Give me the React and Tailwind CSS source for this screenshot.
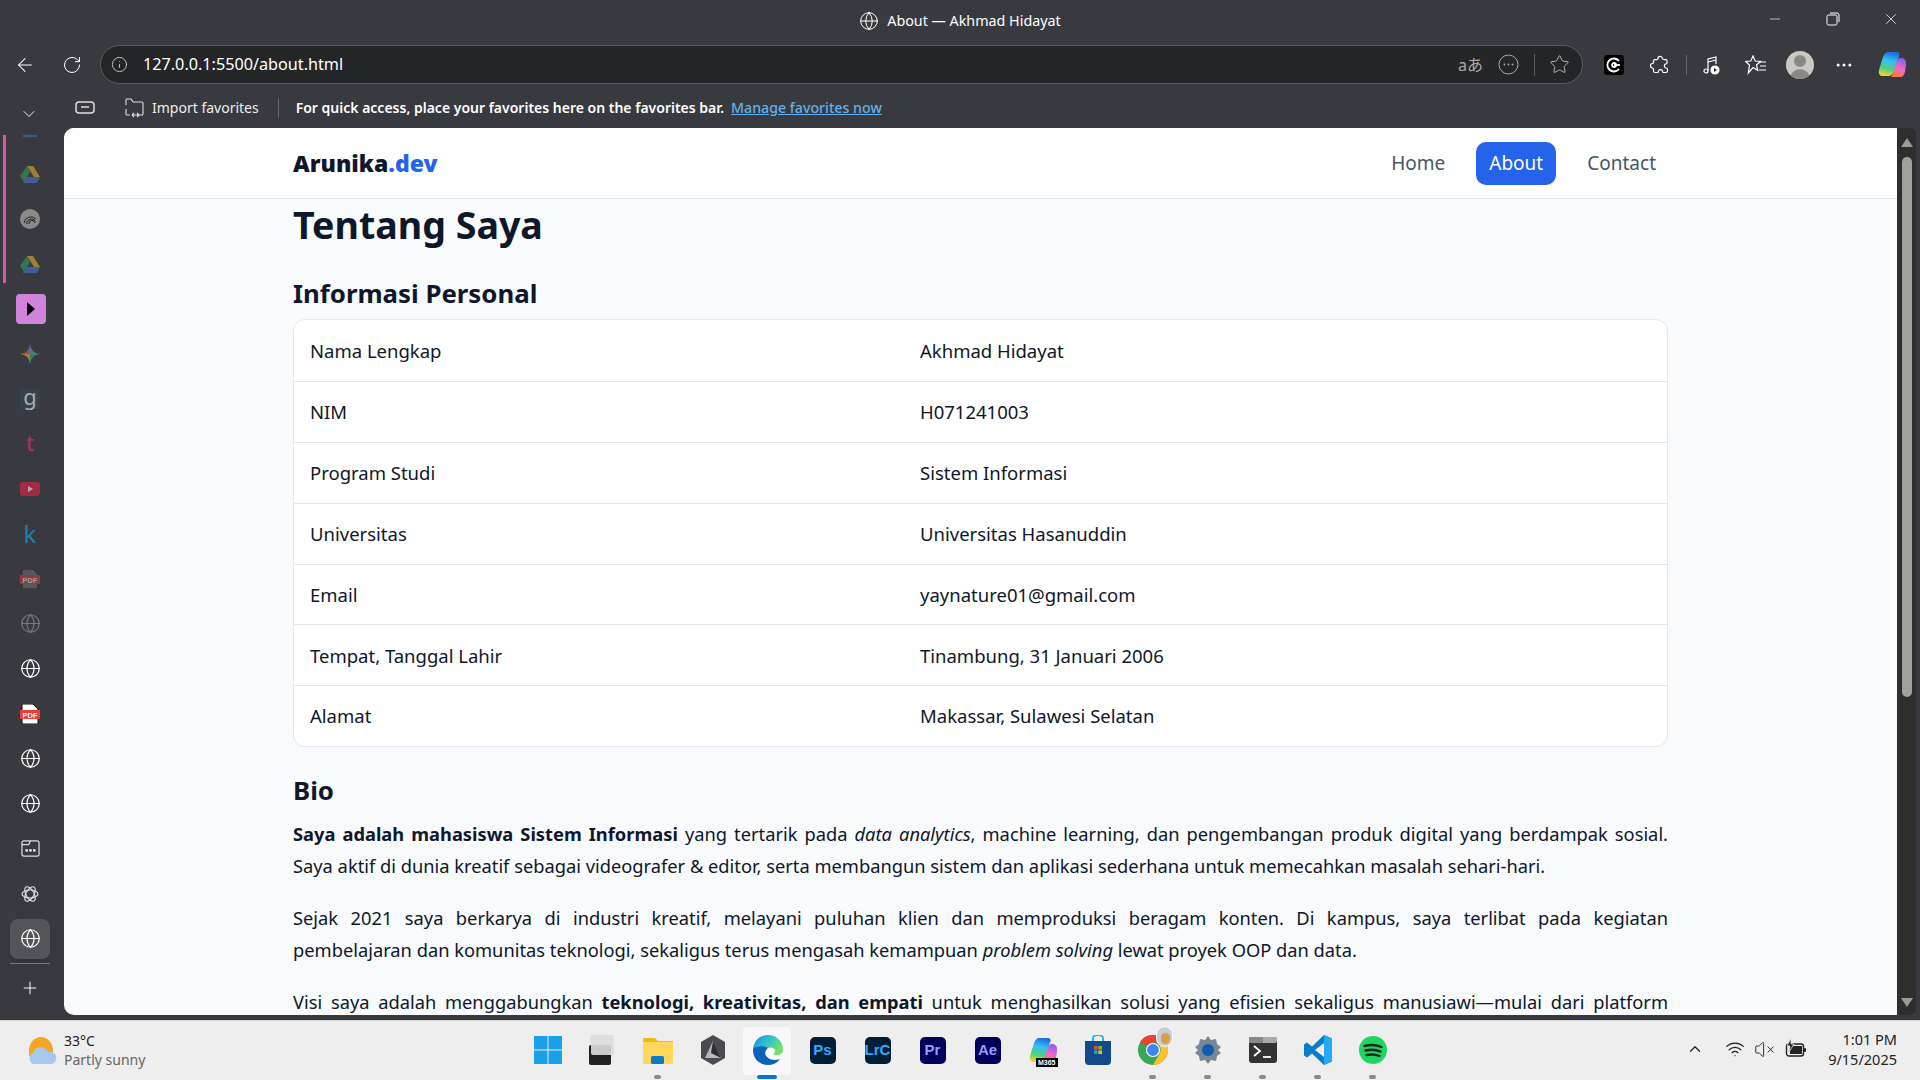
import React from 'react';
import { ArrowLeft, RotateCw, Info, Globe, Ellipsis, Star, Plus, ChevronDown, ChevronUp, Minus, X, Wifi, VolumeX } from 'lucide-react';

const font = { fontFamily: '"Noto Sans", sans-serif' };

function Drive({ dim }) {
  return (
    <svg width="20" height="18" viewBox="0 0 20 18" className={dim ? 'opacity-60' : ''}>
      <path d="M7 1h6l7 11h-6z" fill="#e0b030" />
      <path d="M7 1l3 6-6 10-4-6z" fill="#2f9e55" />
      <path d="M6 12h14l-3 6H3z" fill="#4a78c8" />
    </svg>
  );
}

function Pdf({ dim }) {
  return (
    <svg width="20" height="20" viewBox="0 0 20 20" className={dim ? 'opacity-50' : ''}>
      <path d="M2 0h11l5 5v15H2z" fill={dim ? '#777' : '#fff'} stroke="#111" strokeWidth="1" />
      <rect x="0" y="6" width="20" height="9" fill="#ee3a3a" />
      <text x="10" y="13.5" textAnchor="middle" fontSize="7.5" fontWeight="700" fill="#fff" fontFamily="Liberation Sans">PDF</text>
    </svg>
  );
}

function SideRow({ children, active }) {
  return (
    <div className="h-[45px] flex items-center justify-center shrink-0 pr-[4px]">
      {active ? (
        <div className="w-10 h-10 rounded-lg bg-[#54555a] shadow-md flex items-center justify-center">{children}</div>
      ) : children}
    </div>
  );
}

function Sidebar() {
  const g = <Globe size={21} strokeWidth={1.4} className="text-white" />;
  return (
    <aside className="w-16 shrink-0 flex flex-col relative overflow-hidden">
      <div className="absolute left-[3px] top-[7px] w-[3px] h-[148px] bg-[#d65aa8]" />
      <div className="absolute left-[23px] top-[7px] w-[14px] h-[2px] bg-[#3a5a9a]" />
      <div className="h-[23px] shrink-0" />
      <SideRow><Drive dim /></SideRow>
      <SideRow>
        <div className="w-5 h-5 rounded-full bg-[#8a8a8a] flex items-center justify-center">
          <svg width="14" height="12" viewBox="0 0 14 12" fill="none" stroke="#222" strokeWidth="1"><path d="M1 10a7 7 0 0 1 12-4M3.500 11a5 5 0 0 1 9-3M6 11a3 3 0 0 1 6-1" /></svg>
        </div>
      </SideRow>
      <SideRow><Drive dim /></SideRow>
      <SideRow>
        <div className="w-[30px] h-[30px] rounded-[4px] bg-[#d183dc] flex items-center justify-center ml-[2px]">
          <svg width="10" height="14" viewBox="0 0 10 14"><path d="M1 0l8 7-8 7z" fill="#000" /></svg>
        </div>
      </SideRow>
      <SideRow>
        <svg width="20" height="20" viewBox="0 0 20 20" className="opacity-70">
          <path d="M10 0q1 9 10 10h-10z" fill="#5a8fd0" /><path d="M10 0q-1 9-10 10h10z" fill="#c95a50" />
          <path d="M10 20q1-9 10-10h-10z" fill="#3f9e60" /><path d="M10 20q-1-9-10-10h10z" fill="#c89a3a" />
        </svg>
      </SideRow>
      <SideRow>
        <div className="w-5 h-5 bg-[#3a4048] flex items-center justify-center">
          <span className="text-[#a3acb0] text-[22px] font-normal leading-none -mt-[5px]" style={font}>g</span>
        </div>
      </SideRow>
      <SideRow><span className="text-[#a8325c] text-[21px] font-medium leading-none" style={font}>t</span></SideRow>
      <SideRow>
        <div className="w-5 h-[14px] rounded-[3px] bg-[#a52a45] flex items-center justify-center">
          <svg width="5" height="6" viewBox="0 0 5 6"><path d="M0 0l5 3-5 3z" fill="#aaa" /></svg>
        </div>
      </SideRow>
      <SideRow><span className="text-[#1f7ea8] text-[24px] font-normal leading-none" style={font}>k</span></SideRow>
      <SideRow><Pdf dim /></SideRow>
      <SideRow><Globe size={21} strokeWidth={1.4} className="text-[#77787c]" /></SideRow>
      <SideRow>{g}</SideRow>
      <SideRow><Pdf /></SideRow>
      <SideRow>{g}</SideRow>
      <SideRow>{g}</SideRow>
      <SideRow>
        <svg width="19" height="19" viewBox="0 0 20 20" fill="none" stroke="#ddd" strokeWidth="1.3">
          <path d="M3 2h14a2 2 0 0 1 2 2v12a2 2 0 0 1-2 2H3a2 2 0 0 1-2-2V4a2 2 0 0 1 2-2z" />
          <path d="M1 6h7l2-4" />
          <circle cx="6" cy="12" r=".9" fill="#ddd" /><circle cx="10" cy="12" r=".9" fill="#ddd" /><circle cx="14" cy="12" r=".9" fill="#ddd" />
        </svg>
      </SideRow>
      <SideRow>
        <svg width="18" height="18" viewBox="0 0 18 18" fill="none" stroke="#ddd" strokeWidth="1.2">
          <ellipse cx="9" cy="9" rx="8" ry="4" /><ellipse cx="9" cy="9" rx="8" ry="4" transform="rotate(60 9 9)" /><ellipse cx="9" cy="9" rx="8" ry="4" transform="rotate(120 9 9)" />
        </svg>
      </SideRow>
      <SideRow active>{g}</SideRow>
      <div className="h-[1px] bg-[#77787c] ml-[10px] mr-[14px] mt-[2px] shrink-0" />
      <div className="h-[48px] flex items-center justify-center shrink-0 pr-[4px]"><Plus size={20} strokeWidth={1.2} className="text-white" /></div>
    </aside>
  );
}

function TitleBar() {
  return (
    <div className="h-[42px] shrink-0 flex items-center relative">
      <div className="flex-1 flex items-center justify-center gap-[8px] text-white text-[14.3px] pb-[1px]" style={font}>
        <Globe size={20} strokeWidth={1.2} />
        <span>About — Akhmad Hidayat</span>
      </div>
      <div className="absolute right-0 top-0 h-[38px] flex items-center text-white">
        <div className="w-[58px] flex justify-center"><Minus size={16} strokeWidth={1} /></div>
        <div className="w-[58px] flex justify-center">
          <svg width="14" height="14" viewBox="0 0 14 14" fill="none" stroke="#fff" strokeWidth="1"><rect x="1" y="3" width="10" height="10" rx="1.5" /><path d="M4 1h7a2 2 0 0 1 2 2v7" /></svg>
        </div>
        <div className="w-[58px] flex justify-center"><X size={18} strokeWidth={1} /></div>
      </div>
    </div>
  );
}

function Copilot({ id = 'cp' }) {
  return (
    <svg width="28" height="27" viewBox="0 0 28 27">
      <defs>
        <linearGradient id={id + 'a'} x1="0.5" y1="0" x2="0.3" y2="1"><stop offset="0" stopColor="#1b6fe0" /><stop offset=".35" stopColor="#35c1f1" /><stop offset=".7" stopColor="#52d17c" /><stop offset="1" stopColor="#ffd02e" /></linearGradient>
        <linearGradient id={id + 'b'} x1="0.7" y1="0" x2="0.4" y2="1"><stop offset="0" stopColor="#8a5cf0" /><stop offset=".55" stopColor="#f06bc5" /><stop offset="1" stopColor="#ff7a3c" /></linearGradient>
      </defs>
      <path d="M10 1h9c2 0 3 1 2.500 3L16 20c-1 3-3 5-6 5H5c-3 0-5-2-4-6L5 6c1-3 3-5 5-5z" fill={`url(#${id}a)`} />
      <path d="M13 26h9c3 0 4-2 5-5l1-7c.5-4-1-7-5-7-2 0-3 1-4 3l-4 11c-.5 2-1 4-2 5z" fill={`url(#${id}b)`} />
    </svg>
  );
}

function ToolBar() {
  return (
    <div className="h-[45px] shrink-0 flex items-center text-white">
      <div className="w-[50px] flex justify-center"><ArrowLeft size={22} strokeWidth={1.1} /></div>
      <div className="w-[50px] flex justify-center -ml-[3px] mr-[3px]"><RotateCw size={20} strokeWidth={1.2} /></div>
      <div className="w-[1483px] h-[39px] rounded-full bg-[#242527] border border-[#5b5c60] flex items-center pl-[10px] pr-[10px]">
        <Info size={17} strokeWidth={1.2} className="text-[#d8d8d8]" />
        <span className="ml-[15px] text-[16.2px] text-white" style={font}>127.0.0.1:5500/about.html</span>
        <div className="flex-1" />
        <span className="text-[#aaa] text-[16px] mr-[15px]" style={{ fontFamily: '"Noto Sans","Noto Sans CJK JP",sans-serif' }}>aあ</span>
        <svg width="21" height="21" viewBox="0 0 21 21" fill="none" stroke="#aaa" strokeWidth="1" className="mr-[15px]">
          <circle cx="10.5" cy="10.500" r="9.500" />
          <circle cx="6.500" cy="10.500" r=".9" fill="#aaa" stroke="none" /><circle cx="10.500" cy="10.500" r=".9" fill="#aaa" stroke="none" /><circle cx="14.500" cy="10.500" r=".9" fill="#aaa" stroke="none" />
        </svg>
        <div className="w-px h-[22px] bg-[#5b5c60] mr-[14px]" />
        <Star size={21} strokeWidth={1.1} className="text-[#bbb] mr-[2px]" />
      </div>
      <div className="ml-[21px] w-5 h-5 rounded-[3px] bg-black flex items-center justify-center">
        <svg width="16" height="16" viewBox="0 0 16 16" fill="none" stroke="#fff" strokeWidth="1.8"><path d="M13 4a6.500 6.500 0 1 0 0 8" /><circle cx="8" cy="8" r="2" /><path d="M8 8h6" /></svg>
      </div>
      <svg width="20" height="20" viewBox="0 0 20 20" fill="none" stroke="#fff" strokeWidth="1.2" strokeLinejoin="round" className="ml-[26px]">
        <path d="M8 3.500C8 1 12 .5 12.500 3.500c.1 1 1 1.200 2 1.200h1.500a1 1 0 0 1 1 1v2.300c0 .8-1 1-1.500 1C14 9 14 13 16 13c.5 0 1.500.2 1.500 1v2a1.500 1.500 0 0 1-1.500 1.500h-2.500c-.8 0-1-.8-1-1.300 0-2.200-4-2.200-4 0 0 .6-.3 1.300-1 1.300H5c-1 0-1.500-.7-1.500-1.500v-2c0-.8-.6-1-1.200-1-2.500-.5-2.500-4 0-4.500.6 0 1.200-.3 1.200-1V6c0-.8.600-1.300 1.500-1.300h1.500c1 0 1.500-.4 1.500-1.200z" />
      </svg>
      <div className="w-px h-5 bg-[#66676b] ml-[16px]" />
      <svg width="18" height="20" viewBox="0 0 18 20" fill="none" stroke="#fff" strokeWidth="1.2" className="ml-[16px]">
        <circle cx="3" cy="16" r="2" /><path d="M5 16V4l8-2v7" /><path d="M5 7l8-2" /><circle cx="12" cy="15" r="4" fill="#fff" /><path d="M11 13l3 2-3 2z" fill="#222" stroke="none" />
      </svg>
      <svg width="22" height="20" viewBox="0 0 22 20" fill="none" stroke="#fff" strokeWidth="1.2" className="ml-[24px]">
        <path d="M8 1l2.200 5 5.300.5-4 3.500 1.200 5.300L8 12.600 3.300 18 4.500 10 .5 6.500 5.800 6z" /><path d="M15 7h6M15 11h6M14 15h7" />
      </svg>
      <div className="ml-[19px] w-7 h-7 rounded-full bg-[#c9c8c3] relative overflow-hidden">
        <div className="absolute left-[8px] top-[4px] w-3 h-3 rounded-full bg-[#8a8985]" />
        <div className="absolute left-[4px] top-[18px] w-5 h-5 rounded-full bg-[#8a8985]" />
      </div>
      <Ellipsis size={20} strokeWidth={1.6} className="ml-[20px]" />
      <div className="ml-[24px]"><Copilot /></div>
    </div>
  );
}

function FavBar() {
  return (
    <div className="h-[41px] shrink-0 flex items-center text-white text-[14px]" style={font}>
      <div className="w-[57px] flex justify-center mt-[12px]"><ChevronDown size={20} strokeWidth={1.1} /></div>
      <svg width="20" height="14" viewBox="0 0 20 14" fill="none" stroke="#ddd" strokeWidth="1.5" className="ml-[18px]"><rect x="1" y="1" width="18" height="11" rx="3" /><path d="M6 6h8" /></svg>
      <svg width="22" height="22" viewBox="0 0 22 22" fill="none" stroke="#ddd" strokeWidth="1.1" className="ml-[28px]">
        <path d="M3 8V3a1 1 0 0 1 1-1h4l2 3h9a1 1 0 0 1 1 1v11a1 1 0 0 1-1 1h-3M3 12v5a1 1 0 0 0 1 1h3M9 18h7M9 18l2-2M9 18l2 2M16 18l-2-2M16 18l-2 2" />
      </svg>
      <span className="ml-[7px] text-[#eee]">Import favorites</span>
      <div className="w-px h-5 bg-[#66676b] ml-[19px]" />
      <span className="ml-[17px] font-semibold">For quick access, place your favorites here on the favorites bar.</span>
      <span className="ml-[7px] underline text-[#62b0ee] font-medium text-[14.2px]">Manage favorites now</span>
    </div>
  );
}

const rows = [
  ['Nama Lengkap', 'Akhmad Hidayat'],
  ['NIM', 'H071241003'],
  ['Program Studi', 'Sistem Informasi'],
  ['Universitas', 'Universitas Hasanuddin'],
  ['Email', 'yaynature01@gmail.com'],
  ['Tempat, Tanggal Lahir', 'Tinambung, 31 Januari 2006'],
  ['Alamat', 'Makassar, Sulawesi Selatan'],
];

function Page() {
  return (
    <div className="flex-1 min-w-0 h-full bg-[#f8fafc] rounded-tl-[10px] rounded-bl-[10px] overflow-hidden text-[#0f172a]" style={font}>
      <header className="h-[71px] bg-white border-b border-[#e2e8f0] flex items-center px-[229px]">
        <div className="text-[23px] font-black pt-[1px]">Arunika<span className="text-[#2563eb]">.dev</span></div>
        <div className="flex-1" />
        <nav className="flex items-center gap-[19px] text-[19px] text-[#475569]">
          <span className="px-[12px]">Home</span>
          <span className="h-[43px] w-[80px] flex items-center justify-center rounded-[10px] bg-[#2563eb] text-white">About</span>
          <span className="px-[12px]">Contact</span>
        </nav>
      </header>
      <main className="px-[229px]">
        <h1 className="text-[37.6px] font-bold leading-[54px] -mt-[1px]">Tentang Saya</h1>
        <h2 className="text-[25.8px] font-bold leading-[38px] mt-[22px] mb-[7px]">Informasi Personal</h2>
        <div className="rounded-[12px] border border-[#e2e8f0] bg-white">
          {rows.map(([a, b], i) => (
            <div key={a} className={`h-[60.9px] flex items-center text-[18.5px] ${i ? 'border-t border-[#e2e8f0]' : ''}`}>
              <div className="w-[626px] pl-[16px] shrink-0">{a}</div>
              <div>{b}</div>
            </div>
          ))}
        </div>
        <h2 className="text-[25.8px] font-bold leading-[38px] mt-[24px] mb-[9px]">Bio</h2>
        <p className="text-[18.3px] leading-[32px] text-justify mb-[20px]">
          <b>Saya adalah mahasiswa Sistem Informasi</b> yang tertarik pada <i>data analytics</i>, machine learning, dan pengembangan produk digital yang berdampak sosial. Saya aktif di dunia kreatif sebagai videografer &amp; editor, serta membangun sistem dan aplikasi sederhana untuk memecahkan masalah sehari-hari.
        </p>
        <p className="text-[18.3px] leading-[32px] text-justify mb-[20px]">
          <span className="block [text-align-last:justify]">Sejak 2021 saya berkarya di industri kreatif, melayani puluhan klien dan memproduksi beragam konten. Di kampus, saya terlibat pada kegiatan</span>
          pembelajaran dan komunitas teknologi, sekaligus terus mengasah kemampuan <i>problem solving</i> lewat proyek OOP dan data.
        </p>
        <p className="text-[18.3px] leading-[32px] text-justify">
          <span className="block [text-align-last:justify]">Visi saya adalah menggabungkan <b>teknologi, kreativitas, dan empati</b> untuk menghasilkan solusi yang efisien sekaligus manusiawi—mulai dari platform</span>
          digital hingga karya visual yang berdampak bagi banyak orang.
        </p>
      </main>
    </div>
  );
}

function Scrollbar() {
  return (
    <div className="w-[19px] shrink-0 h-full bg-[#2e2e2f] rounded-tr-[6px] rounded-br-[6px] flex flex-col items-center pt-[10px] pb-[8px]">
      <svg width="12" height="9" viewBox="0 0 12 9" className="shrink-0"><path d="M6 0l6 9H0z" fill="#9a9a9a" /></svg>
      <div className="w-[10px] h-[540px] rounded-full bg-[#a0a0a0] mt-[10px] shrink-0" />
      <div className="flex-1" />
      <svg width="12" height="9" viewBox="0 0 12 9" className="shrink-0"><path d="M0 0h12L6 9z" fill="#9a9a9a" /></svg>
    </div>
  );
}

function TIcon({ children, dot, active }) {
  return (
    <div className="w-[55px] h-[58px] relative flex items-center justify-center shrink-0">
      {active && <div className="absolute left-[3px] top-[6px] w-[48px] h-[48px] rounded-[4px] bg-[#f8f8f8]" />}
      <div className="relative flex items-center justify-center">{children}</div>
      {dot && <div className="absolute left-[24px] bottom-[0px] w-[7px] h-[4px] rounded-full bg-[#8a8a8a]" />}
      {active && <div className="absolute left-[17px] bottom-[0px] w-5 h-[4px] rounded-full bg-[#0a74d6]" />}
    </div>
  );
}

function Adobe({ bg, fg, t }) {
  return <div className={`w-[26px] h-[27px] rounded-[5px] flex items-center justify-center text-[15px] font-semibold ${bg} ${fg}`} style={{ fontFamily: '"Liberation Sans", sans-serif' }}>{t}</div>;
}

function Taskbar() {
  return (
    <div className="h-[60px] shrink-0 bg-[#eeeeee] border-t border-[#d8d8d8] flex items-center relative">
      <div className="absolute left-[27px] top-[10px] flex items-center gap-[7px]">
        <svg width="30" height="32" viewBox="0 0 30 32">
          <path d="M2 17a12 14 0 0 1 24 0z" fill="#f6a623" /><rect x="2" y="14" width="24" height="8" fill="#f6a623" />
          <path d="M6 30a6 6 0 0 1 0-11 8 8 0 0 1 15-1 6 6 0 0 1 4 12z" fill="#a9c8f0" />
        </svg>
        <div className="text-[14px] leading-[19px] text-[#222]" style={font}>
          <div>33°C</div>
          <div className="text-[#666]">Partly sunny</div>
        </div>
      </div>
      <div className="absolute left-[520px] top-0 flex">
        <TIcon>
          <svg width="28" height="28" viewBox="0 0 28 28"><path d="M0 0h13.500v13.500H0zM14.500 0H28v13.500H14.500zM0 14.500h13.500V28H0zM14.500 14.500H28V28H14.500z" fill="#1aa0e8" /></svg>
        </TIcon>
        <TIcon>
          <div className="w-[24px] h-[30px] relative -ml-[4px]">
            <div className="absolute left-0 bottom-0 w-[22px] h-[20px] rounded-[2px] bg-[#222]" />
            <div className="absolute right-0 top-0 w-[22px] h-[20px] rounded-[2px] bg-[#ddd] opacity-90 shadow" />
          </div>
        </TIcon>
        <TIcon dot>
          <svg width="30" height="28" viewBox="0 0 30 28"><path d="M0 2h12l3 3h15v23H0z" fill="#f2b90f" /><path d="M0 6h30v22H0z" fill="#ffd75a" /><rect x="8" y="20" width="13" height="8" rx="1.500" fill="#0f7bc8" /></svg>
        </TIcon>
        <TIcon>
          <svg width="28" height="30" viewBox="0 0 28 30"><path d="M14 0l12 7v16l-12 7-12-7V7z" fill="#4a4a50" /><path d="M14 6l8 17H6z" fill="#b8b8bc" /><path d="M14 6l-2 12 10 5z" fill="#2d2d30" /></svg>
        </TIcon>
        <TIcon active>
          <svg width="30" height="30" viewBox="0 0 30 30">
            <defs><linearGradient id="edg" x1="0" y1="0.2" x2="1" y2="0.6"><stop offset="0" stopColor="#1a8fe0" /><stop offset=".55" stopColor="#35c4c8" /><stop offset="1" stopColor="#72e06a" /></linearGradient></defs>
            <path d="M15 0C6 0 0 7 0 15h30C30 6 23 0 15 0z" fill="url(#edg)" />
            <path d="M30 15c0 3-3 5-6 5-3 0-6-1-6-3 0-2 2-3 2-3l10 1z" fill="#72e06a" />
            <path d="M0 15c0 9 7 15 15 15 5 0 9-2 12-6-5 2-10 1-13-2-3-3-2-7 1-9-4-2-8-2-11-1C2 12 0 13 0 15z" fill="#0c63b8" />
            <path d="M15 13c3-1.500 7 0 7 3 0 1.500-1 2.500-2 3-2 1-5 0-6-2-.5-1.500 0-3.500 1-4z" fill="#fff" />
          </svg>
        </TIcon>
        <TIcon><Adobe bg="bg-[#001e36]" fg="text-[#31a8ff]" t="Ps" /></TIcon>
        <TIcon><Adobe bg="bg-[#001e36]" fg="text-[#31a8ff]" t="LrC" /></TIcon>
        <TIcon><Adobe bg="bg-[#00005b]" fg="text-[#9999ff]" t="Pr" /></TIcon>
        <TIcon><Adobe bg="bg-[#00005b]" fg="text-[#9999ff]" t="Ae" /></TIcon>
        <TIcon>
          <div className="relative"><Copilot id="cm" />
            <span className="absolute -right-[1px] -bottom-[3px] bg-black text-white text-[7px] font-bold px-[2px] leading-[9px]" style={{ fontFamily: '"Liberation Sans", sans-serif' }}>M365</span>
          </div>
        </TIcon>
        <TIcon>
          <svg width="26" height="30" viewBox="0 0 26 30" fill="none"><path d="M8 6V3a5 3 0 0 1 10 0v3" stroke="#2bb4e8" strokeWidth="2" /><path d="M0 6h26v20a4 4 0 0 1-4 4H4a4 4 0 0 1-4-4z" fill="#144a8a" /><path d="M9 11h3.600v3.600H9z" fill="#f25022" /><path d="M13.400 11H17v3.600h-3.600z" fill="#7fba00" /><path d="M9 15.400h3.600V19H9z" fill="#00a4ef" /><path d="M13.400 15.400H17V19h-3.600z" fill="#ffb900" /></svg>
        </TIcon>
        <TIcon dot>
          <div className="relative">
            <svg width="30" height="30" viewBox="0 0 30 30"><circle cx="15" cy="15" r="15" fill="#3aa757" /><path d="M15 0a15 15 0 0 1 13 7.500H15a7.500 7.500 0 0 0-6.500 3.800L2 7A15 15 0 0 1 15 0z" fill="#ea4335" /><path d="M28 7.500A15 15 0 0 1 15 30l6.500-11.300A7.500 7.500 0 0 0 21.500 11z" fill="#fbc02d" /><circle cx="15" cy="15" r="6.500" fill="#4285f4" stroke="#fff" strokeWidth="1.200" /></svg>
            <div className="absolute -right-[5px] -top-[9px] w-[17px] h-[21px] rounded-full bg-[#c8cdd6] border border-white overflow-hidden"><div className="w-[9px] h-[11px] bg-[#d9a24a] ml-[4px] mt-[6px] rounded-full" /></div>
          </div>
        </TIcon>
        <TIcon dot>
          <svg width="28" height="30" viewBox="0 0 28 30"><path d="M14 1l3 4 5-1 1 5 4 3-3 3 3 3-4 3-1 5-5-1-3 4-3-4-5 1-1-5-4-3 3-3-3-3 4-3 1-5 5 1z" fill="#7a8794" /><circle cx="14" cy="15" r="6" fill="#0f5cb0" /></svg>
        </TIcon>
        <TIcon dot>
          <svg width="28" height="26" viewBox="0 0 28 26"><rect width="28" height="26" rx="3" fill="#333" /><rect width="28" height="6" rx="2" fill="#aaa" /><rect width="14" height="6" fill="#888" /><path d="M5 9l6 5-6 5" stroke="#fff" strokeWidth="1.800" fill="none" /><path d="M14 20h8" stroke="#fff" strokeWidth="1.800" /></svg>
        </TIcon>
        <TIcon dot>
          <svg width="30" height="30" viewBox="0 0 28 30">
            <path d="M20 0l8 3.500v23L20 30 8 18.500l-5 4-3-2v-11l3-2 5 4zM20 8l-9 7 9 7z" fill="#0a7cc8" fillRule="evenodd" />
            <path d="M20 0l8 3.500v23L20 30z" fill="#25a9f0" />
          </svg>
        </TIcon>
        <TIcon dot>
          <svg width="28" height="28" viewBox="0 0 28 28" fill="none"><circle cx="14" cy="14" r="14" fill="#1ed760" /><path d="M5.500 10q9-2.500 17 1M6.500 14.500q8-2 15 1M7.500 19q7-1.500 13 1" stroke="#222" strokeWidth="2.400" strokeLinecap="round" /></svg>
        </TIcon>
      </div>
      <div className="absolute right-[23px] -top-[2px] h-[60px] flex items-center text-[#222]">
        <ChevronUp size={18} strokeWidth={1.6} className="mr-[21px]" />
        <Wifi size={20} strokeWidth={1.5} className="mr-[9px]" />
        <VolumeX size={21} strokeWidth={1.1} className="mr-[10px]" />
        <svg width="22" height="22" viewBox="0 0 22 22" className="mr-[21px]">
          <rect x="1.500" y="6" width="17" height="12" rx="2.500" fill="none" stroke="#222" strokeWidth="1.400" />
          <rect x="5" y="8" width="12" height="8" fill="#222" />
          <rect x="19" y="10" width="2" height="4" rx="1" fill="#222" />
          <path d="M6 0L2 8h3l-1 6 5-8H6z" fill="#222" stroke="#eee" strokeWidth=".8" />
        </svg>
        <div className="text-[14.5px] leading-[20px] text-right" style={font}>
          <div>1:01 PM</div>
          <div>9/15/2025</div>
        </div>
      </div>
    </div>
  );
}

export default function App() {
  return (
    <div className="w-[1920px] h-[1080px] overflow-hidden bg-[#393a3f] flex flex-col">
      <TitleBar />
      <ToolBar />
      <FavBar />
      <div className="flex-1 min-h-0 flex">
        <Sidebar />
        <div className="flex-1 min-w-0 h-[887px] flex pr-[4px]">
          <Page />
          <Scrollbar />
        </div>
      </div>
      <Taskbar />
    </div>
  );
}
